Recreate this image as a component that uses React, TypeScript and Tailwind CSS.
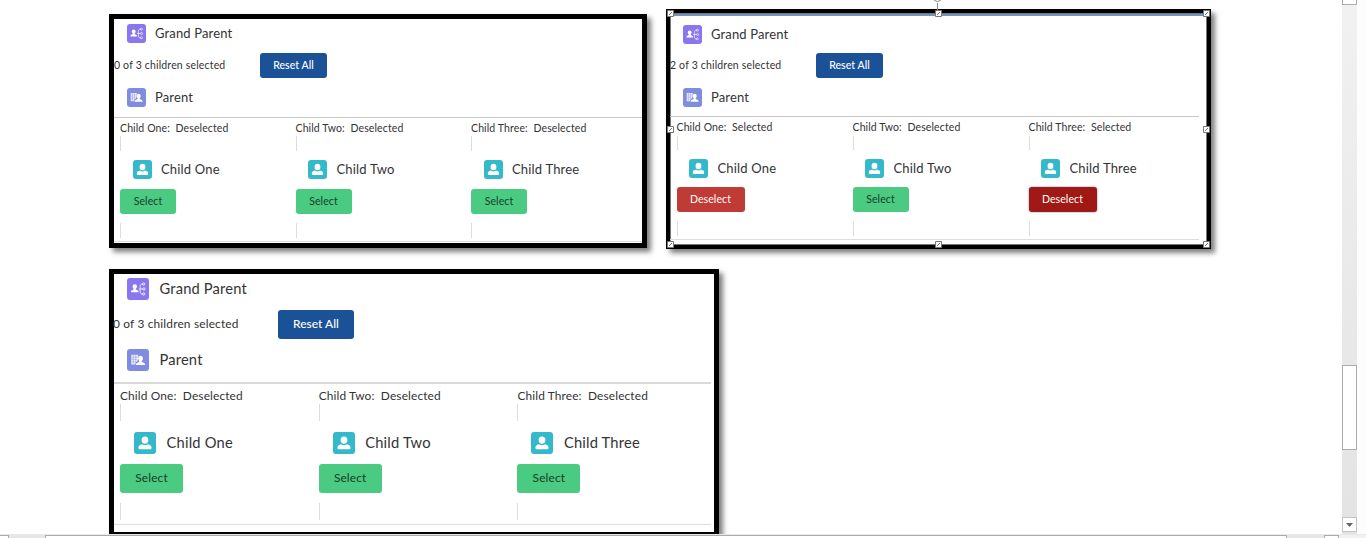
import React from "react";

type Size = {
  titleRow: string;
  icon: string;
  title: string;
  summaryRow: string;
  summary: string;
  reset: string;
  parentRow: string;
  divider: string;
  grid: string;
  status: string;
  stub: string;
  childRow: string;
  childText: string;
  button: string;
  select: string;
  deselect: string;
  lowerStub: string;
  end: string;
};

const first: Size = {
  titleRow: "mt-[5px] h-[19px] pl-[12.5px] gap-[9.5px]",
  icon: "size-[19px] rounded-[3px]",
  title: "text-[13px] tracking-[0.15px]",
  summaryRow: "mt-[10px] h-[25px]",
  summary: "w-[146px] text-[10.5px] tracking-[0.17px]",
  reset: "w-[67px] h-[25px] text-[10.5px] tracking-[0.05px]",
  parentRow: "mt-[10px] h-[19px] pl-[12.5px] gap-[9.5px]",
  divider: "mt-[10px] w-[528px] border-t border-[#c9c8c8]",
  grid: "pl-[6px] grid-cols-[175.5px_175.5px_150px]",
  status: "mt-[4px] h-[14px] text-[10.5px] tracking-[0.12px]",
  stub: "h-[15px]",
  childRow: "mt-[9px] h-[19px] pl-[12.5px] gap-[9.5px]",
  childText: "text-[13px] tracking-[0.18px]",
  button: "mt-[10px] h-[25px] text-[10.5px] tracking-[0.1px]",
  select: "w-[56px]",
  deselect: "w-[68px]",
  lowerStub: "mt-[9px] h-[15px]",
  end: "mt-[3px] w-[528px]",
};

const second: Size = {
  ...first,
  titleRow: "mt-[10px] h-[19px] pl-[12.5px] gap-[9.5px]",
  summaryRow: "mt-[9px] h-[25px]",
  parentRow: "mt-[10px] h-[19px] pl-[12.5px] gap-[9.5px]",
  divider: "mt-[9px] w-[529px] border-t border-[#c9c8c8]",
  grid: "pl-[6.5px] grid-cols-[176px_176px_150px]",
  status: "mt-[3px] h-[16px] text-[10.5px] tracking-[0.12px]",
  stub: "h-[14px]",
  button: "mt-[9px] h-[25px] text-[10.5px] tracking-[0.1px]",
  end: "mt-[3px] w-[529px]",
};

const large: Size = {
  titleRow: "mt-[4px] h-[22px] pl-[13px] gap-[10.5px]",
  icon: "size-[22px] rounded-[3px]",
  title: "pb-[2px] text-[14.7px] tracking-[0.17px]",
  summaryRow: "mt-[10px] h-[29px]",
  summary: "w-[165px] pb-[2px] text-[11.9px] tracking-[0.17px] -ml-px",
  reset: "w-[76px] h-[29px] pb-[2px] text-[11.9px] tracking-[0.05px]",
  parentRow: "mt-[10px] h-[22px] pl-[13px] gap-[10.5px]",
  divider: "mt-[11px] w-[597px] border-t-2 border-[#d9d9d9]",
  grid: "pl-[6px] grid-cols-[198.7px_198.7px_170px]",
  status: "mt-[3px] h-[17px] text-[11.9px] tracking-[0.13px]",
  stub: "h-[17px]",
  childRow: "mt-[11px] h-[22px] pl-[14px] gap-[10.5px]",
  childText: "pb-[2px] text-[14.7px] tracking-[0.2px]",
  button: "mt-[10px] h-[29px] pb-[2px] text-[11.9px] tracking-[0.15px]",
  select: "w-[63px]",
  deselect: "w-[76px]",
  lowerStub: "mt-[10px] h-[17px]",
  end: "mt-[4px] w-[597px]",
};

function GrandIcon({ className }: { className: string }) {
  return (
    <svg viewBox="0 0 19 19" className={`shrink-0 bg-[#8a76ee] ${className}`} fill="none">
      <g fill="#fff">
        <circle cx="6.7" cy="7.4" r="1.9" />
        <path d="M5.7 8.7h2v1.3l1.7.9c.4.2.5.6.5 1.5H3.5c0-.9.1-1.3.5-1.5l1.7-.9z" />
      </g>
      <g stroke="#fff" strokeOpacity=".85" strokeWidth=".8">
        <path d="M10.2 9.5h3.6M13.9 5.1c-1.9 0-2.5.8-2.5 2.2v4.6c0 1.4.7 2.1 2.5 2.1" />
        <circle cx="14.4" cy="5.2" r="1" />
        <circle cx="14.6" cy="9.5" r="1" />
        <circle cx="14.4" cy="13.8" r="1" />
      </g>
    </svg>
  );
}

function ParentIcon({ className }: { className: string }) {
  return (
    <svg viewBox="0 0 19 19" className={`shrink-0 bg-[#7f8cdf] ${className}`}>
      <path d="M3.7 5h6v3.2l-.8 2.4-1.6 1v1.7H3.7z" fill="#fff" fillOpacity=".85" />
      <path d="M5.5 5v8M7.5 5v6M3.7 7h6M3.7 9h5M3.7 11h4" stroke="#7f8cdf" strokeWidth=".35" />
      <ellipse cx="11.7" cy="8.1" rx="2" ry="2.3" fill="#fff" />
      <path d="M10.7 9.8h2v1.3l2.1.9c.6.3.8.7.8 1.8H7.8c0-1.1.2-1.5.8-1.8l2.1-.9z" fill="#fff" />
    </svg>
  );
}

function ChildIcon({ className }: { className: string }) {
  return (
    <svg viewBox="0 0 19 19" className={`shrink-0 bg-[#34b9cb] ${className}`} fill="#fff">
      <ellipse cx="9.5" cy="7" rx="2.9" ry="3.2" />
      <path d="M3.8 13.4c0-1.6 1.2-2.2 3.2-2.9.7.6 1.5.9 2.5.9s1.8-.3 2.5-.9c2 .7 3.2 1.3 3.2 2.9 0 1-.4 1.5-1.2 1.5H5c-.8 0-1.2-.5-1.2-1.5z" />
    </svg>
  );
}

type Child = { name: string; selected?: boolean; focused?: boolean };

function Records({ size: s, count, items }: { size: Size; count: number; items: Child[] }) {
  return (
    <div className="flex flex-col whitespace-nowrap text-[#333335]">
      <div className={`flex items-center ${s.titleRow}`}>
        <GrandIcon className={s.icon} />
        <span className={s.title}>Grand Parent</span>
      </div>
      <div className={`flex items-center ${s.summaryRow}`}>
        <span className={s.summary}>{count} of 3 children selected</span>
        <button className={`rounded-[3px] bg-[#1b5297] font-medium text-white ${s.reset}`}>Reset All</button>
      </div>
      <div className={`flex items-center ${s.parentRow}`}>
        <ParentIcon className={s.icon} />
        <span className={s.title}>Parent</span>
      </div>
      <div className={s.divider} />
      <div className={`grid ${s.grid}`}>
        {items.map((c) => (
          <div key={c.name} className="flex flex-col items-start">
            <div className={`flex items-center whitespace-pre ${s.status}`}>
              {`${c.name}:  ${c.selected ? "Selected" : "Deselected"}`}
            </div>
            <div className={`w-px bg-[#dcdcdc] ${s.stub}`} />
            <div className={`flex items-center ${s.childRow}`}>
              <ChildIcon className={s.icon} />
              <span className={s.childText}>{c.name}</span>
            </div>
            <button
              className={`rounded-[3px] ${s.button} ${c.selected ? s.deselect : s.select} ${
                c.focused
                  ? "bg-[#a11915] text-white shadow-[0_0_2px_#4c7ba9]"
                  : c.selected
                    ? "bg-[#c03a36] text-white"
                    : "bg-[#4bca81] text-[#153e28]"
              }`}
            >
              {c.selected ? "Deselect" : "Select"}
            </button>
            <div className={`w-px bg-[#dcdcdc] ${s.lowerStub}`} />
          </div>
        ))}
      </div>
      <div className={`border-t border-[#dddddd] ${s.end}`} />
    </div>
  );
}

function Handle({ className }: { className: string }) {
  return (
    <svg viewBox="0 0 7 7" className={`absolute size-[7px] ${className}`}>
      <path d="M.5.5h6v6h-6z" fill="#fff" stroke="#777" />
      <path d="M2 5l3-3" stroke="#777" />
    </svg>
  );
}

const none: Child[] = [{ name: "Child One" }, { name: "Child Two" }, { name: "Child Three" }];
const some: Child[] = [
  { name: "Child One", selected: true },
  { name: "Child Two" },
  { name: "Child Three", selected: true, focused: true },
];

export default function App() {
  return (
    <div className="flex h-[538px] w-[1366px] flex-col overflow-hidden bg-white font-['Lato',sans-serif]">
      <div className="flex h-[534px]">
        <main className="flex w-[1342px] flex-col overflow-hidden pl-[109px]">
          <div className="flex h-[269px] shrink-0 items-start">
            <section className="mt-[14px] h-[234px] w-[538px] shrink-0 border-[5px] border-black bg-white shadow-[4px_4px_5px_rgba(0,0,0,0.5)]">
              <Records size={first} count={0} items={none} />
            </section>
            <section className="relative mt-[9px] ml-[19px] h-[240px] w-[545px] shrink-0 border-4 border-black bg-white shadow-[4px_4px_5px_rgba(0,0,0,0.5)]">
              <div className="flex h-[232px] w-[537px] flex-col border border-[#777]">
                <div className="h-[2px] shrink-0 bg-[#7394bd]" />
                <div className="-mt-px -ml-px">
                  <Records size={second} count={2} items={some} />
                </div>
              </div>
              <div className="absolute -top-[10px] left-[267px] h-[12px] w-px bg-[#888]" />
              <div className="absolute -top-[20px] left-[263px] size-[9px] rounded-full border border-[#888] bg-white" />
              <Handle className="-top-[3px] -left-[3px]" />
              <Handle className="-top-[3px] left-[265px]" />
              <Handle className="-top-[3px] left-[533px]" />
              <Handle className="top-[113px] -left-[3px]" />
              <Handle className="top-[113px] left-[533px]" />
              <Handle className="top-[228px] -left-[3px]" />
              <Handle className="top-[228px] left-[265px]" />
              <Handle className="top-[228px] left-[533px]" />
            </section>
          </div>
          <section className="h-[265px] w-[610px] shrink-0 border-[5px] border-b-2 border-black bg-white shadow-[4px_4px_5px_rgba(0,0,0,0.5)]">
            <Records size={large} count={0} items={none} />
          </section>
        </main>
        <aside className="flex w-[15px] flex-col bg-linear-to-b from-[#f1f1f1] to-[#e3e3e3]">
          <div className="h-[5px] border border-t-0 border-[#ababab] bg-white" />
          <div className="mt-[360px] h-[85px] border border-[#ababab] bg-white" />
          <div className="mt-[67px] flex h-[15px] items-center justify-center border border-[#c6c6c6] bg-white">
            <svg viewBox="0 0 7 4" className="h-[4px] w-[7px]">
              <path d="M0 0h7L3.5 4z" fill="#666" />
            </svg>
          </div>
        </aside>
        <div className="flex-1 bg-[#fdfdfd]" />
      </div>
      <footer className="flex h-[4px] border-t border-[#e9e9e9] bg-[#e6e6e6]">
        <div className="w-[9px] border-t border-r border-[#ababab] bg-white" />
        <div className="ml-[36px] w-[1242px] border border-b-0 border-[#ababab] bg-white" />
        <div className="ml-[37px] w-[15px] border border-b-0 border-[#ababab] bg-white" />
        <div className="flex-1 bg-[#f1f1f1]" />
      </footer>
    </div>
  );
}
